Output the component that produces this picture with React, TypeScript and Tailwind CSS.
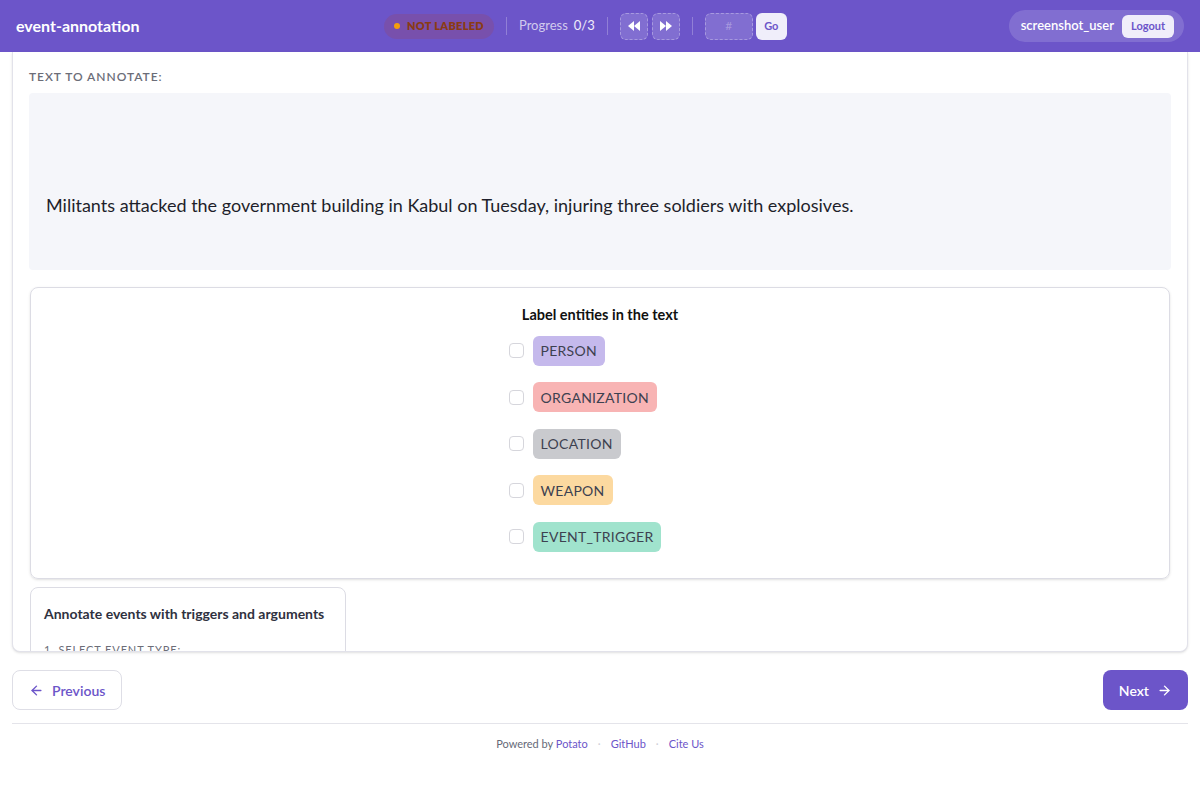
import { ArrowLeft, ArrowRight } from 'lucide-react'

const LABELS: { name: string; bg: string }[] = [
  { name: 'PERSON', bg: 'bg-[#c5b9ec]' },
  { name: 'ORGANIZATION', bg: 'bg-[#f8b4b4]' },
  { name: 'LOCATION', bg: 'bg-[#c9cace]' },
  { name: 'WEAPON', bg: 'bg-[#fcd9a0]' },
  { name: 'EVENT_TRIGGER', bg: 'bg-[#a0e3cd]' },
]

function Rewind() {
  return (
    <svg width="12" height="10" viewBox="0 0 12 10" fill="white">
      <path d="M6 0v10L0 5z" />
      <path d="M12 0v10L6 5z" />
    </svg>
  )
}

function Forward() {
  return (
    <svg width="12" height="10" viewBox="0 0 12 10" fill="white">
      <path d="M0 0v10l6-5z" />
      <path d="M6 0v10l6-5z" />
    </svg>
  )
}

export default function App() {
  return (
    <div className="h-[800px] bg-white font-['Lato',sans-serif] text-[#2b2d3a] flex flex-col">
      {/* ── Header ─────────────────────────────────────────── */}
      <header className="h-[52px] shrink-0 bg-[#6c55c9] flex items-center px-4">
        <div className="text-white font-bold text-[16px] w-[368px] shrink-0">event-annotation</div>

        <div className="flex items-center">
          <div className="flex items-center gap-[7px] h-[25px] px-[10px] rounded-full bg-[#7d4f9f]/70">
            <span className="w-[6px] h-[6px] rounded-full bg-[#f59e0b]" />
            <span className="text-[11px] font-extrabold tracking-wide text-[#8a3b14]">NOT LABELED</span>
          </div>
          <div className="w-px h-[18px] bg-white/25 mx-3" />
          <span className="text-[13px] text-white/70">Progress</span>
          <span className="text-[13px] text-white/90 ml-1.5">0/3</span>
          <div className="w-px h-[18px] bg-white/25 mx-3" />
          <div className="flex gap-1">
            <button className="w-[28px] h-[27px] rounded-md bg-white/15 border border-dashed border-white/30 flex items-center justify-center">
              <Rewind />
            </button>
            <button className="w-[28px] h-[27px] rounded-md bg-white/15 border border-dashed border-white/30 flex items-center justify-center">
              <Forward />
            </button>
          </div>
          <div className="w-px h-[18px] bg-white/25 mx-3" />
          <div className="w-[48px] h-[27px] rounded-md bg-white/15 border border-dashed border-white/30 flex items-center justify-center text-[12px] text-white/30">
            #
          </div>
          <button className="ml-[3px] w-[31px] h-[27px] rounded-md bg-[#f0eefa] text-[#6c55c9] text-[11px] font-bold">
            Go
          </button>
        </div>

        <div className="flex-1 flex justify-end">
          <div className="flex items-center gap-2 h-[32px] pl-3 pr-[10px] rounded-full bg-white/15">
            <span className="text-white text-[13px] font-semibold">screenshot_user</span>
            <button className="h-[23px] px-[9px] rounded-md bg-[#f0eefa] text-[#6c55c9] text-[11px] font-bold">
              Logout
            </button>
          </div>
        </div>
      </header>

      {/* ── Main card ──────────────────────────────────────── */}
      <div className="mx-3 h-[600px] shrink-0 overflow-hidden rounded-b-lg border border-[#e2e2ea] border-t-0 bg-white shadow-sm px-4">
        <div className="pt-[16px] text-[12px] font-semibold tracking-[0.08em] text-[#6b6d78]">TEXT TO ANNOTATE:</div>
        <div className="mt-[7px] h-[177px] rounded bg-[#f5f6fa] flex items-center px-[17px] pt-[48px]">
          <p className="text-[18px] text-[#1e1f2b]">
            Militants attacked the government building in Kabul on Tuesday, injuring three soldiers with explosives.
          </p>
        </div>

        <div className="mt-[17px] ml-px mr-px h-[292px] rounded-lg border border-[#dcdce4] shadow-sm flex flex-col items-center pt-[16px]">
          <div className="text-[14.5px] font-bold text-[#111]">Label entities in the text</div>
          <div className="mt-[10px] flex flex-col gap-[16.5px] self-center -ml-[30px]">
            {LABELS.map(l => (
              <label key={l.name} className="flex items-center gap-[9px]">
                <span className="w-[15px] h-[15px] rounded border border-[#d6d6dc] bg-white" />
                <span className={`h-[30px] px-[8px] rounded-md flex items-center text-[14px] tracking-[0.02em] text-[#3d4150] ${l.bg}`}>
                  {l.name}
                </span>
              </label>
            ))}
          </div>
        </div>

        <div className="mt-[8px] ml-px w-[316px] h-[120px] rounded-lg border border-[#dcdce4] px-[13px] pt-[15px]">
          <div className="text-[14px] font-bold text-[#2f3140]">Annotate events with triggers and arguments</div>
          <div className="mt-[18px] text-[11px] tracking-[0.08em] text-[#6b6d78]">1. SELECT EVENT TYPE:</div>
        </div>
      </div>

      {/* ── Navigation ─────────────────────────────────────── */}
      <div className="mx-3 mt-[18px] flex justify-between">
        <button className="h-[40px] px-4 rounded-lg border border-[#dedee6] bg-white flex items-center gap-2 text-[14px] font-semibold text-[#6c55c9]">
          <ArrowLeft size={15} strokeWidth={2.25} />
          Previous
        </button>
        <button className="h-[40px] px-4 rounded-lg bg-[#6c55c9] flex items-center gap-2 text-[14px] font-semibold text-white">
          Next
          <ArrowRight size={15} strokeWidth={2.25} />
        </button>
      </div>

      <div className="mx-3 mt-[13px] border-t border-[#e4e4ea]" />

      <footer className="mt-[12px] flex justify-center items-center gap-[10px] text-[11px]">
        <span className="text-[#666a78]">
          Powered by <span className="text-[#6c55c9]">Potato</span>
        </span>
        <span className="text-[#d0d0d8]">·</span>
        <span className="text-[#6c55c9]">GitHub</span>
        <span className="text-[#d0d0d8]">·</span>
        <span className="text-[#6c55c9]">Cite Us</span>
      </footer>
    </div>
  )
}
